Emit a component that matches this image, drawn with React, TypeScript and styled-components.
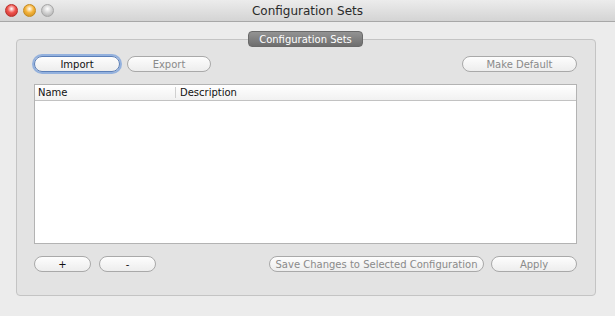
import React from "react";
import styled, { createGlobalStyle } from "styled-components";

const Global = createGlobalStyle`
  html, body { margin: 0; padding: 0; background: #ececec; }
  body { font-family: "DejaVu Sans", "Lucida Grande", sans-serif; }
`;

const Window = styled.div`
  width: 615px;
  height: 316px;
  background: #ececec;
  display: flex;
  flex-direction: column;
  overflow: hidden;
`;

const TitleBar = styled.div`
  height: 22px;
  flex: none;
  box-sizing: border-box;
  border-bottom: 1px solid #a8a8a8;
  background: linear-gradient(#ececec, #d4d4d4);
  display: flex;
  align-items: center;
  position: relative;
  padding-left: 5px;
`;

const Lights = styled.div`
  display: flex;
  gap: 5px;
`;

const Light = styled.span<{ $c: string; $e: string }>`
  width: 13px;
  height: 13px;
  border-radius: 50%;
  box-sizing: border-box;
  border: 1px solid ${(p) => p.$e};
  background: radial-gradient(circle at 50% 35%, #fff 0, ${(p) => p.$c} 45%, ${(p) => p.$e} 100%);
`;

const Title = styled.div`
  position: absolute;
  left: 0;
  right: 0;
  top: 0;
  bottom: 0;
  display: flex;
  align-items: center;
  justify-content: center;
  font-size: 12px;
  color: #2a2a2a;
  pointer-events: none;
`;

const Content = styled.div`
  flex: 1;
  padding: 17px 19px 20px 16px;
`;

const Box = styled.div`
  position: relative;
  height: 257px;
  box-sizing: border-box;
  border: 1px solid #c4c4c4;
  border-radius: 4px;
  background: #e3e3e3;
  padding: 16px 18px 0 17px;
  display: flex;
  flex-direction: column;
`;

const Legend = styled.div`
  position: absolute;
  top: -9px;
  left: 231px;
  width: 115px;
  height: 16px;
  box-sizing: border-box;
  border-radius: 4px;
  background: linear-gradient(#939393, #6e6e6e);
  border: 1px solid #6a6a6a;
  color: #fff;
  font-size: 10px;
  display: flex;
  align-items: center;
  justify-content: center;
`;

const Row = styled.div`
  display: flex;
  align-items: center;
  height: 16px;
`;

const Spacer = styled.div`
  flex: 1;
`;

const Button = styled.button<{ $w: number; $gap?: number; $focus?: boolean; $disabled?: boolean }>`
  width: ${(p) => p.$w}px;
  height: 16px;
  margin-left: ${(p) => p.$gap ?? 0}px;
  box-sizing: border-box;
  border-radius: 8px;
  border: 1px solid ${(p) => (p.$focus ? "#5b7fb8" : "#a9a9a9")};
  background: linear-gradient(#fdfdfd, #ededed);
  box-shadow: ${(p) => (p.$focus ? "0 0 0 2px rgba(120,160,220,0.75)" : "none")};
  font-family: inherit;
  font-size: 10px;
  color: ${(p) => (p.$disabled ? "#8a8a8a" : "#111")};
  padding: 0;
  display: flex;
  align-items: center;
  justify-content: center;
`;

const Table = styled.div`
  margin-top: 12px;
  height: 160px;
  box-sizing: border-box;
  border: 1px solid #b3b3b3;
  background: #fff;
  display: flex;
  flex-direction: column;
`;

const Header = styled.div`
  height: 16px;
  box-sizing: border-box;
  border-bottom: 1px solid #c2c2c2;
  background: linear-gradient(#ffffff, #f1f1f1);
  display: grid;
  grid-template-columns: 140px 1fr;
  font-size: 10px;
  color: #111;
`;

const HeaderCell = styled.div<{ $divider?: boolean }>`
  display: flex;
  align-items: center;
  padding-left: ${(p) => (p.$divider ? 4 : 3)}px;
  border-left: ${(p) => (p.$divider ? "1px solid #d0d0d0" : "none")};
  margin: 2px 0;
`;

const BottomRow = styled(Row)`
  margin-top: 12px;
`;

export default function App() {
  return (
    <Window>
      <Global />
      <TitleBar>
        <Lights>
          <Light $c="#f0524c" $e="#b8302b" />
          <Light $c="#f5b33a" $e="#c58a1f" />
          <Light $c="#d4d4d4" $e="#a6a6a6" />
        </Lights>
        <Title>Configuration Sets</Title>
      </TitleBar>
      <Content>
        <Box>
          <Legend>Configuration Sets</Legend>
          <Row>
            <Button $w={86} $focus>Import</Button>
            <Button $w={84} $gap={7} $disabled>Export</Button>
            <Spacer />
            <Button $w={115} $disabled>Make Default</Button>
          </Row>
          <Table>
            <Header>
              <HeaderCell>Name</HeaderCell>
              <HeaderCell $divider>Description</HeaderCell>
            </Header>
          </Table>
          <BottomRow>
            <Button $w={57}>+</Button>
            <Button $w={57} $gap={8}>-</Button>
            <Spacer />
            <Button $w={215} $disabled>Save Changes to Selected Configuration</Button>
            <Button $w={86} $gap={7} $disabled>Apply</Button>
          </BottomRow>
        </Box>
      </Content>
    </Window>
  );
}
